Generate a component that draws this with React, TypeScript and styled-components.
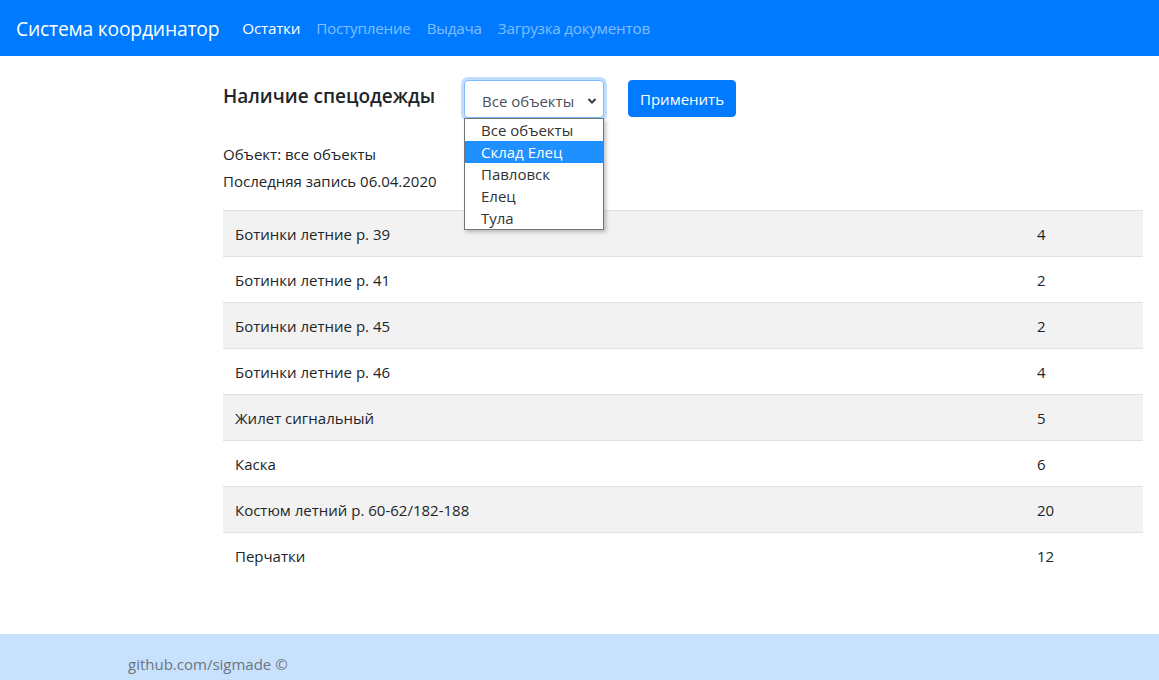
import React from "react";
import styled, { createGlobalStyle } from "styled-components";

const Global = createGlobalStyle`
  html, body { margin: 0; padding: 0; }
  body {
    font-family: "Open Sans", "Noto Sans", sans-serif;
    font-size: 15px;
    color: #212529;
    background: #fff;
    overflow: hidden;
  }
  * { box-sizing: border-box; }
`;

const Page = styled.div`
  display: flex;
  flex-direction: column;
  min-height: 680px;
`;

const Navbar = styled.nav`
  height: 56px;
  background: #007bff;
  display: flex;
  align-items: center;
  padding: 0 16px;
`;

const Brand = styled.a`
  color: #fff;
  font-size: 19.3px;
  margin-right: 15px;
  text-decoration: none;
  letter-spacing: -0.2px;
`;

const NavLink = styled.a<{ $active?: boolean }>`
  color: ${(p) => (p.$active ? "#fff" : "rgba(255,255,255,0.5)")};
  font-size: 15.2px;
  padding: 0 8px;
  text-decoration: none;
  letter-spacing: -0.2px;
`;

const Main = styled.main`
  flex: 1;
  padding: 24px 16px 0 223px;
`;

const Content = styled.div`
  width: 920px;
`;

const HeaderRow = styled.div`
  display: flex;
  align-items: flex-start;
`;

const Title = styled.h5`
  margin: 3px 0 0;
  font-size: 19px;
  font-weight: 600;
  width: 241px;
  letter-spacing: 0;
`;

const SelectWrap = styled.div`
  position: relative;
  width: 140px;
  margin-right: 24px;
`;

const SelectBox = styled.div`
  height: 38px;
  border: 1px solid #80bdff;
  border-radius: 4px;
  box-shadow: 0 0 0 3px rgba(0, 123, 255, 0.25);
  display: flex;
  align-items: center;
  justify-content: space-between;
  padding: 3px 6px 0 17px;
  color: #495057;
  font-size: 15px;
  background: #fff;
`;

const DropList = styled.ul`
  position: absolute;
  top: 38px;
  left: 0;
  width: 140px;
  margin: 0;
  padding: 0;
  list-style: none;
  background: #fff;
  border: 1px solid #767676;
  box-shadow: 2px 2px 4px rgba(0, 0, 0, 0.25);
  z-index: 10;
`;

const Option = styled.li<{ $selected?: boolean }>`
  height: 22px;
  line-height: 22px;
  padding-left: 16px;
  font-size: 15px;
  color: ${(p) => (p.$selected ? "#fff" : "#333")};
  background: ${(p) => (p.$selected ? "#1e90ff" : "transparent")};
`;

const Button = styled.button`
  height: 37px;
  padding: 0 11px;
  background: #007bff;
  border: 1px solid #007bff;
  border-radius: 4px;
  color: #fff;
  font-family: inherit;
  font-size: 15px;
`;

const Info = styled.p`
  margin: 0;
  line-height: 27px;
`;

const InfoBlock = styled.div`
  margin-top: 23px;
  margin-bottom: 15px;
`;

const Table = styled.div`
  display: grid;
  grid-template-columns: 1fr 118px;
`;

const Row = styled.div<{ $striped?: boolean }>`
  display: contents;
  & > div {
    background: ${(p) => (p.$striped ? "#f2f2f2" : "#fff")};
  }
`;

const Cell = styled.div`
  height: 46px;
  border-top: 1px solid #dee2e6;
  padding: 0 12px;
  display: flex;
  align-items: center;
`;

const Footer = styled.footer`
  height: 46px;
  background: #c8e1fd;
  padding: 20px 0 0 128px;
  color: #6c757d;
  font-size: 15px;
  margin-top: 56px;
`;

const rows: [string, string][] = [
  ["Ботинки летние р. 39", "4"],
  ["Ботинки летние р. 41", "2"],
  ["Ботинки летние р. 45", "2"],
  ["Ботинки летние р. 46", "4"],
  ["Жилет сигнальный", "5"],
  ["Каска", "6"],
  ["Костюм летний р. 60-62/182-188", "20"],
  ["Перчатки", "12"],
];

const options = ["Все объекты", "Склад Елец", "Павловск", "Елец", "Тула"];

export default function App() {
  return (
    <>
      <Global />
      <Page>
        <Navbar>
          <Brand>Система координатор</Brand>
          <NavLink $active>Остатки</NavLink>
          <NavLink>Поступление</NavLink>
          <NavLink>Выдача</NavLink>
          <NavLink>Загрузка документов</NavLink>
        </Navbar>
        <Main>
          <Content>
            <HeaderRow>
              <Title>Наличие спецодежды</Title>
              <SelectWrap>
                <SelectBox>
                  <span>Все объекты</span>
                  <svg width="10" height="8" viewBox="0 0 10 8">
                    <path d="M1.5 2 L5 5.5 L8.5 2" fill="none" stroke="#343a40" strokeWidth="2" />
                  </svg>
                </SelectBox>
                <DropList>
                  {options.map((o, i) => (
                    <Option key={o} $selected={i === 1}>
                      {o}
                    </Option>
                  ))}
                </DropList>
              </SelectWrap>
              <Button>Применить</Button>
            </HeaderRow>
            <InfoBlock>
              <Info>Объект: все объекты</Info>
              <Info>Последняя запись 06.04.2020</Info>
            </InfoBlock>
            <Table>
              {rows.map(([name, qty], i) => (
                <Row key={name} $striped={i % 2 === 0}>
                  <Cell>{name}</Cell>
                  <Cell>{qty}</Cell>
                </Row>
              ))}
            </Table>
          </Content>
        </Main>
        <Footer>github.com/sigmade ©</Footer>
      </Page>
    </>
  );
}
